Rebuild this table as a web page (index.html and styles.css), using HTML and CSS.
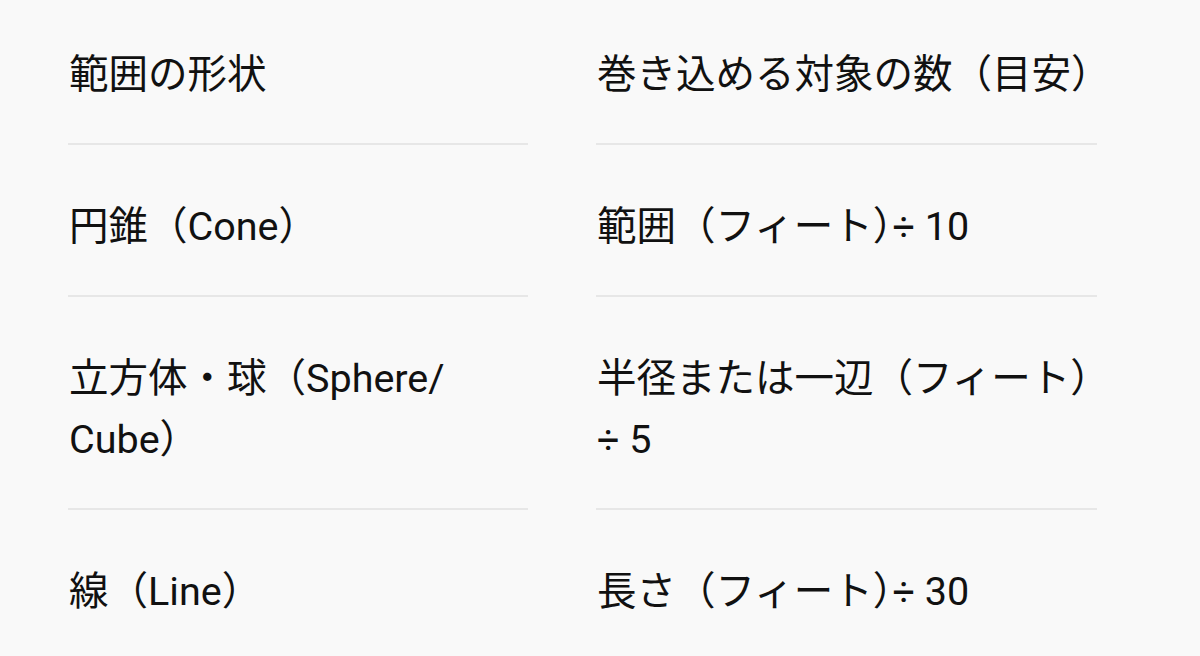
FILE: index.html
```html
<!DOCTYPE html>
<html lang="ja">
<head>
<meta charset="utf-8">
<title>範囲の形状</title>
<link rel="stylesheet" href="styles.css">
</head>
<body>
<div class="table">
  <div class="cell head"><span class="txt">範囲の形状</span></div>
  <div class="cell head"><span class="txt">巻き込める対象の数（目安）</span></div>
  <div class="cell"><span class="txt">円錐（Cone）</span></div>
  <div class="cell"><span class="txt">範囲（フィート<span class="half">）</span>÷ 10</span></div>
  <div class="cell"><span class="txt">立方体・球（Sphere/<wbr>Cube）</span></div>
  <div class="cell"><span class="txt">半径または一辺（フィート）<wbr>÷ 5</span></div>
  <div class="cell last"><span class="txt">線（Line）</span></div>
  <div class="cell last"><span class="txt">長さ（フィート<span class="half">）</span>÷ 30</span></div>
</div>
</body>
</html>
```
FILE: styles.css
```css
html, body {
  margin: 0;
  padding: 0;
  background: #f9f9f9;
}
body {
  width: 1200px;
  height: 656px;
  overflow: hidden;
  font-family: Roboto, "Noto Sans CJK JP", sans-serif;
  color: #111111;
}
.table {
  display: grid;
  grid-template-columns: 460px 501px;
  column-gap: 68px;
  padding-left: 68px;
}
.cell {
  font-size: 39.5px;
  line-height: 61px;
  padding: 51px 0 38px 1px;
  border-bottom: 2px solid #e7e7e7;
}
.cell .txt {
  display: block;
  margin-right: -30px;
}
.cell.head {
  padding-top: 44px;
}
.cell.last {
  border-bottom: none;
}
.half {
  font-feature-settings: "halt";
}
```
